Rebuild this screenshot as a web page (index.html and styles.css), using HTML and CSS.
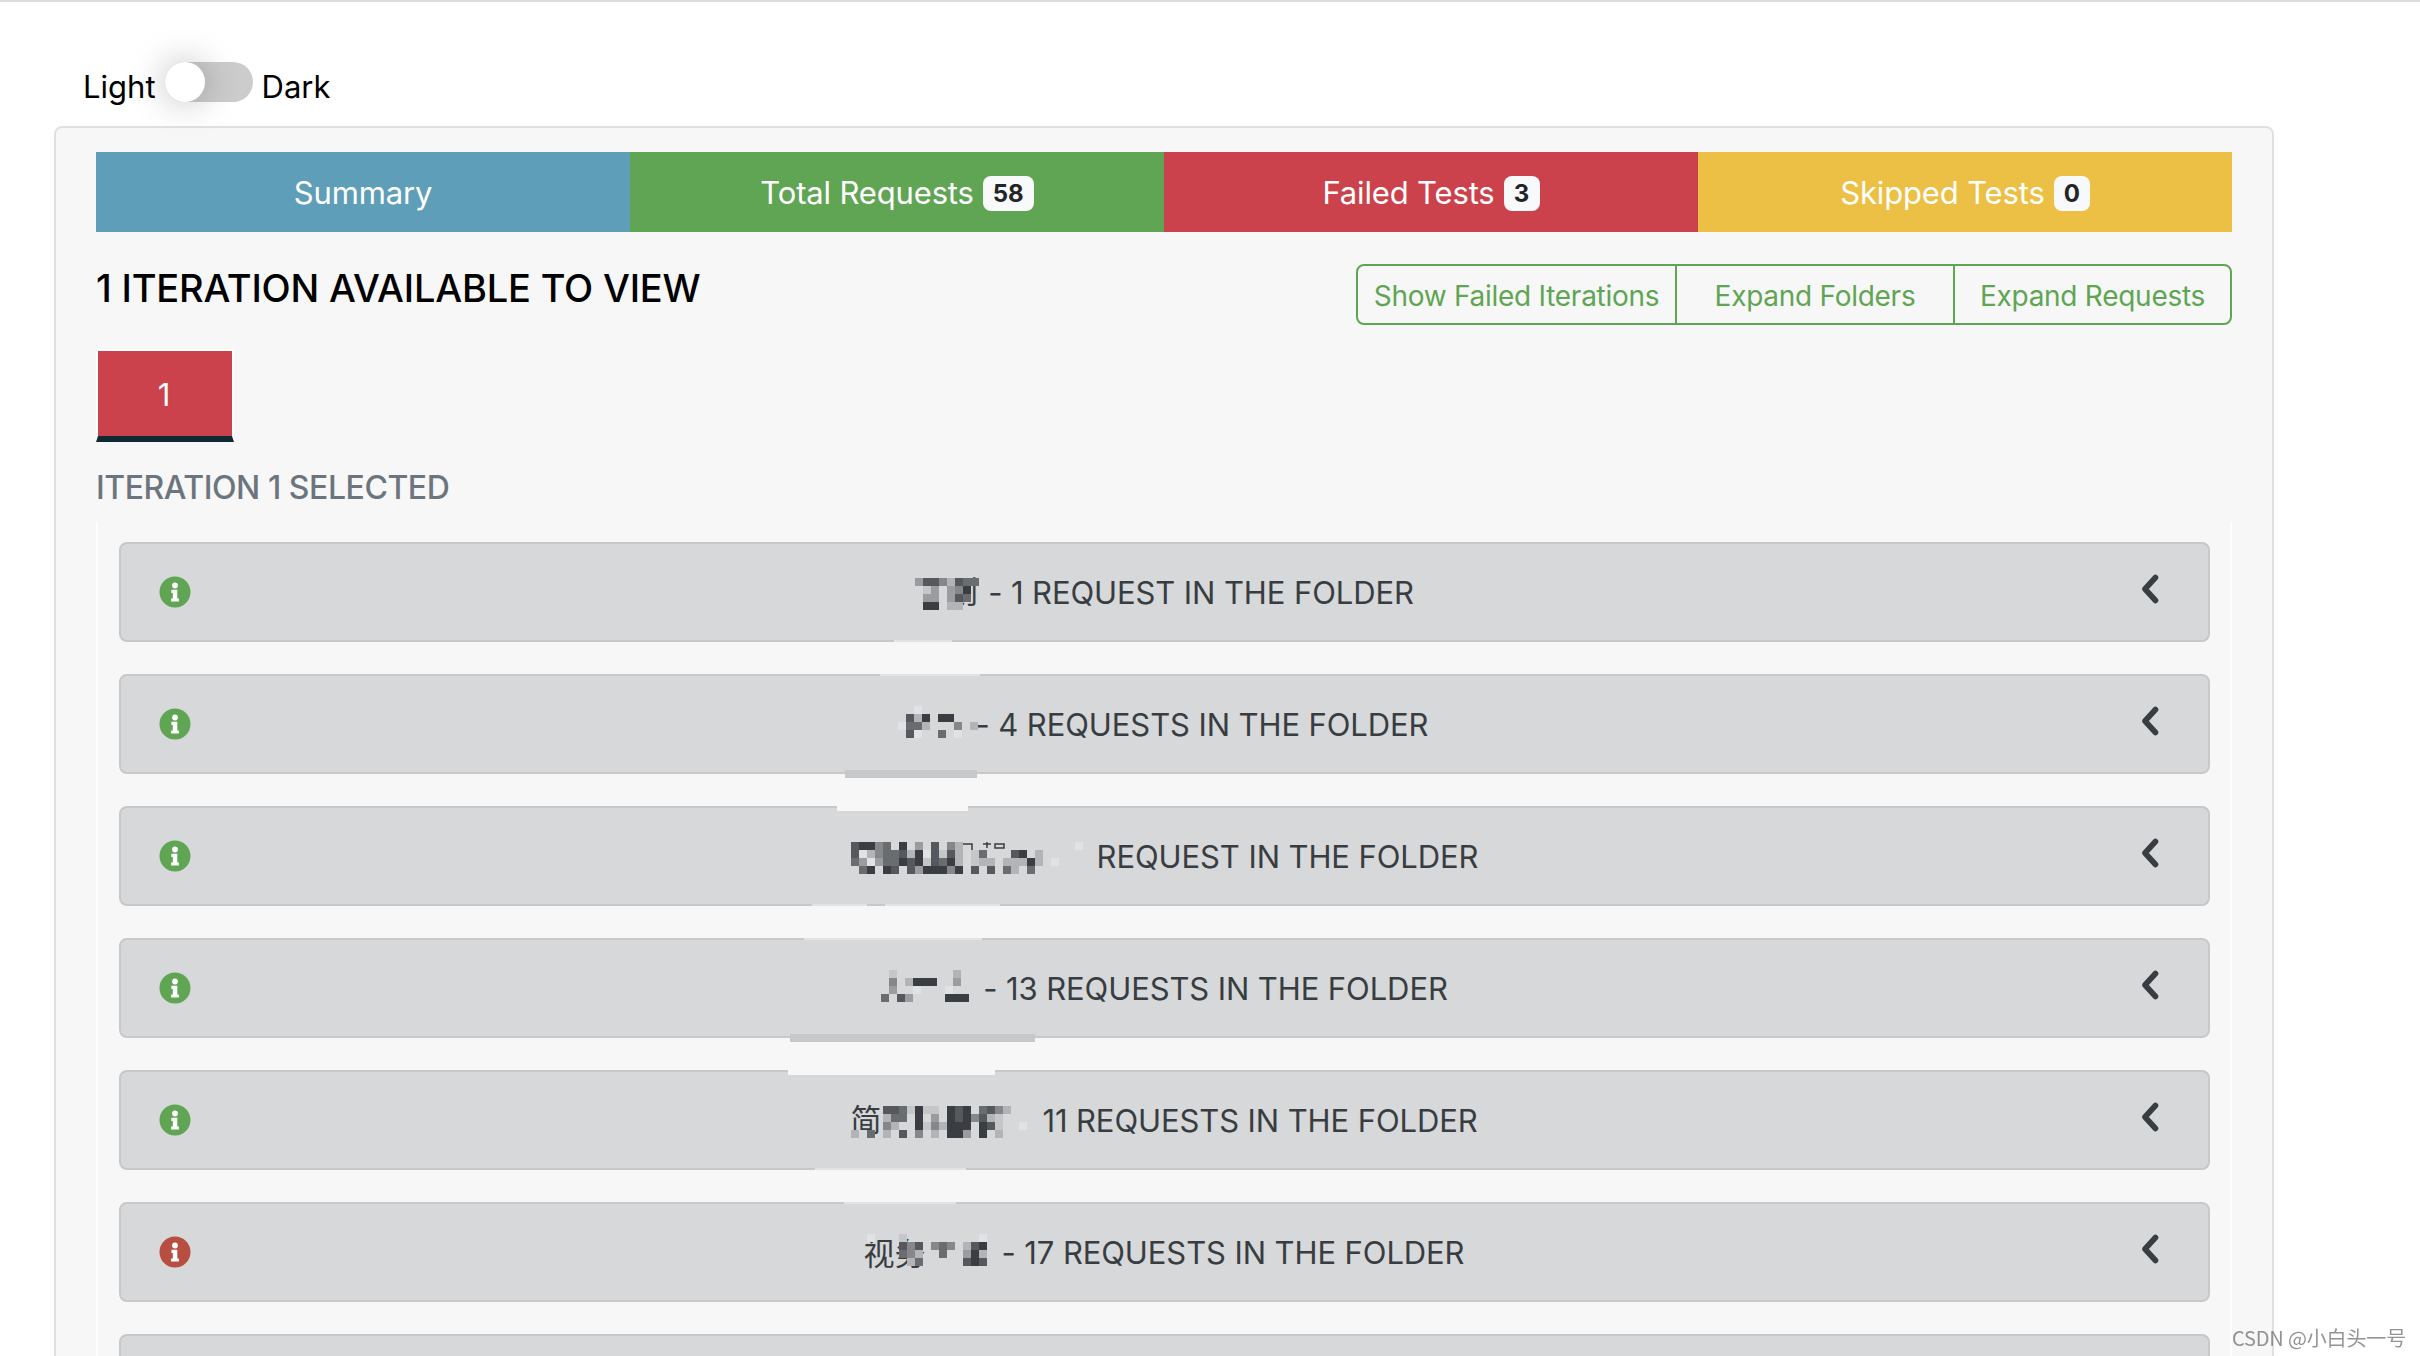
FILE: index.html
```html
<!DOCTYPE html>
<html lang="en">
<head>
<meta charset="utf-8">
<title>Newman Report</title>
<link rel="stylesheet" href="styles.css">
</head>
<body>
<svg class="defs" width="0" height="0" aria-hidden="true">
  <symbol id="info" viewBox="0 0 32 32">
    <circle cx="16" cy="16" r="15.5" fill="currentColor"/>
    <circle cx="16" cy="9.5" r="2.9" fill="#fff"/>
    <path d="M12.4 13.8h5.9v8.6h1.6v3.2h-7.8v-3.2h1.7v-5.4h-1.4z" fill="#fff"/>
  </symbol>
  <symbol id="chev" viewBox="-3 0 22 30">
    <path d="M14.5 3.5 4 15l10.5 11.5" fill="none" stroke="currentColor" stroke-width="5.6" stroke-linecap="round" stroke-linejoin="round"/>
  </symbol>
</svg>

<div class="topline"></div>
<div class="theme">
  <span>Light</span>
  <span class="switch"><span class="knob"></span></span>
  <span>Dark</span>
</div>

<main class="card">
  <nav class="tabs">
    <div class="tab blue">Summary</div>
    <div class="tab green">Total Requests <span class="badge">58</span></div>
    <div class="tab red">Failed Tests <span class="badge">3</span></div>
    <div class="tab yellow">Skipped Tests <span class="badge">0</span></div>
  </nav>

  <div class="headrow">
    <h2 class="heading">1 ITERATION AVAILABLE TO VIEW</h2>
    <div class="btns">
      <button class="btn">Show Failed Iterations</button>
      <button class="btn">Expand Folders</button>
      <button class="btn">Expand Requests</button>
    </div>
  </div>

  <div class="tile">1</div>
  <p class="selected">ITERATION 1 SELECTED</p>

  <section class="list">
    <div class="row">
      <i class="patch light bot" style="left:773px;width:58px"></i>
      <svg class="ico ok"><use href="#info"/></svg>
      <div class="title">
        <span class="mask w73 lo"><span class="cjk at32">则</span>
          <svg class="mosaic" width="73" height="32">
            <rect class="s5" x="0"/><rect class="s2" x="8"/><rect class="s2" x="16"/><rect class="s4" x="24"/><rect class="s6" x="32"/><rect class="s2" x="40"/><rect class="s3" x="48"/><rect class="s3" x="56"/>
            <rect class="s7" x="8" y="8"/><rect class="s5" x="16" y="8"/><rect class="s5" x="32" y="8"/><rect class="s4" x="40" y="8"/><rect class="s1" x="48" y="8"/>
            <rect class="s5" x="8" y="16"/><rect class="s5" x="16" y="16"/><rect class="s5" x="32" y="16"/><rect class="s2" x="40" y="16"/><rect class="s3" x="48" y="16"/>
            <rect class="s1" x="8" y="24"/><rect class="s1" x="16" y="24"/><rect class="s6" x="32" y="24"/><rect class="s6" x="40" y="24"/>
          </svg></span>
        <span class="label">- 1 REQUEST IN THE FOLDER</span>
      </div>
      <svg class="chev"><use href="#chev"/></svg>
    </div>

    <div class="row">
      <i class="patch light top" style="left:759px;width:100px"></i>
      <i class="patch dark bot" style="left:724px;width:132px"></i>
      <svg class="ico ok"><use href="#info"/></svg>
      <div class="title nudge">
        <span class="mask w78 hi">
          <svg class="mosaic" width="78" height="32">
            <rect class="s8" x="16"/>
            <rect class="s2" x="8" y="8"/><rect class="s6" x="16" y="8"/><rect class="s1" x="24" y="8"/><rect class="s1" x="40" y="8"/><rect class="s1" x="48" y="8"/>
            <rect class="s8" x="0" y="16"/><rect class="s3" x="8" y="16"/><rect class="s3" x="16" y="16"/><rect class="s6" x="24" y="16"/><rect class="s4" x="56" y="16"/><rect class="s6" x="72" y="16"/>
            <rect class="s2" x="8" y="24"/><rect class="s8" x="16" y="24"/><rect class="s3" x="40" y="24"/><rect class="s8" x="56" y="24"/>
          </svg></span>
        <span class="label">- 4 REQUESTS IN THE FOLDER</span>
      </div>
      <svg class="chev"><use href="#chev"/></svg>
    </div>

    <div class="row">
      <i class="patch white top thick" style="left:716px;width:131px"></i>
      <i class="patch light bot" style="left:691px;width:55px"></i>
      <i class="patch light bot" style="left:764px;width:115px"></i>
      <svg class="ico ok"><use href="#info"/></svg>
      <div class="title">
        <span class="mask w246 lo">
          <svg class="mosaic" width="246" height="32">
            <rect class="s2" x="0"/><rect class="s1" x="8"/><rect class="s1" x="16"/><rect class="s4" x="24"/><rect class="s3" x="32"/><rect class="s1" x="48"/><rect class="s5" x="64"/><rect class="s2" x="80"/><rect class="s4" x="96"/><rect class="s6" x="104"/><rect class="s8" x="224" y="0"/>
            <rect class="s2" x="0" y="8"/><rect class="s8" x="8" y="8"/><rect class="s6" x="16" y="8"/><rect class="s4" x="24" y="8"/><rect class="s3" x="32" y="8"/><rect class="s3" x="40" y="8"/><rect class="s2" x="48" y="8"/><rect class="s6" x="56" y="8"/><rect class="s1" x="64" y="8"/><rect class="s8" x="72" y="8"/><rect class="s2" x="80" y="8"/><rect class="s7" x="88" y="8"/><rect class="s2" x="96" y="8"/><rect class="s6" x="104" y="8"/><rect class="s7" x="120" y="8"/><rect class="s3" x="128" y="8"/><rect class="s2" x="160" y="8"/><rect class="s1" x="168" y="8"/><rect class="s6" x="184" y="8"/>
            <rect class="s3" x="0" y="16"/><rect class="s5" x="8" y="16"/><rect class="s8" x="16" y="16"/><rect class="s5" x="24" y="16"/><rect class="s3" x="32" y="16"/><rect class="s3" x="40" y="16"/><rect class="s1" x="48" y="16"/><rect class="s2" x="56" y="16"/><rect class="s1" x="64" y="16"/><rect class="s7" x="72" y="16"/><rect class="s2" x="80" y="16"/><rect class="s3" x="88" y="16"/><rect class="s1" x="96" y="16"/><rect class="s6" x="104" y="16"/><rect class="s7" x="120" y="16"/><rect class="s6" x="128" y="16"/><rect class="s6" x="136" y="16"/><rect class="s6" x="152" y="16"/><rect class="s6" x="160" y="16"/><rect class="s6" x="168" y="16"/><rect class="s1" x="176" y="16"/><rect class="s6" x="184" y="16"/><rect class="s8" x="200" y="16"/>
            <rect class="s3" x="8" y="24"/><rect class="s1" x="16" y="24"/><rect class="s1" x="32" y="24"/><rect class="s2" x="40" y="24"/><rect class="s2" x="56" y="24"/><rect class="s5" x="64" y="24"/><rect class="s1" x="72" y="24"/><rect class="s1" x="80" y="24"/><rect class="s1" x="88" y="24"/><rect class="s4" x="96" y="24"/><rect class="s1" x="104" y="24"/><rect class="s2" x="120" y="24"/><rect class="s2" x="136" y="24"/><rect class="s3" x="152" y="24"/><rect class="s6" x="160" y="24"/><rect class="s3" x="176" y="24"/>
            <path class="scrap" d="M112 2h9v6M132 2h8M136 0v6M144 2h9v4h-9z"/>
          </svg></span>
        <span class="label">REQUEST IN THE FOLDER</span>
      </div>
      <svg class="chev"><use href="#chev"/></svg>
    </div>

    <div class="row">
      <i class="patch light top" style="left:683px;width:178px"></i>
      <i class="patch dark bot" style="left:669px;width:245px"></i>
      <svg class="ico ok"><use href="#info"/></svg>
      <div class="title">
        <span class="mask w102 hi">
          <svg class="mosaic" width="102" height="32">
            <rect class="s7" x="8"/><rect class="s6" x="72"/>
            <rect class="s4" x="8" y="8"/><rect class="s6" x="24" y="8"/><rect class="s1" x="32" y="8"/><rect class="s1" x="40" y="8"/><rect class="s1" x="48" y="8"/><rect class="s5" x="72" y="8"/>
            <rect class="s5" x="8" y="16"/><rect class="s8" x="32" y="16"/><rect class="s8" x="64" y="16"/>
            <rect class="s3" x="0" y="24"/><rect class="s2" x="16" y="24"/><rect class="s5" x="24" y="24"/><rect class="s1" x="64" y="24"/><rect class="s1" x="72" y="24"/><rect class="s1" x="80" y="24"/>
          </svg></span>
        <span class="label">- 13 REQUESTS IN THE FOLDER</span>
      </div>
      <svg class="chev"><use href="#chev"/></svg>
    </div>

    <div class="row">
      <i class="patch white top thick" style="left:667px;width:207px"></i>
      <i class="patch light bot" style="left:694px;width:151px"></i>
      <svg class="ico ok"><use href="#info"/></svg>
      <div class="title">
        <span class="mask w191 lo"><span class="cjk">简</span>
          <svg class="mosaic" width="191" height="32">
            <rect class="s2" x="32"/><rect class="s2" x="40"/><rect class="s3" x="48"/><rect class="s7" x="56"/><rect class="s1" x="64"/><rect class="s7" x="72"/><rect class="s7" x="80"/><rect class="s1" x="96"/><rect class="s2" x="104"/><rect class="s1" x="112"/><rect class="s3" x="128"/><rect class="s2" x="136"/><rect class="s4" x="144"/><rect class="s6" x="152"/>
            <rect class="s6" x="32" y="8"/><rect class="s3" x="40" y="8"/><rect class="s3" x="48" y="8"/><rect class="s1" x="64" y="8"/><rect class="s5" x="80" y="8"/><rect class="s1" x="96" y="8"/><rect class="s2" x="104" y="8"/><rect class="s1" x="112" y="8"/><rect class="s4" x="120" y="8"/><rect class="s2" x="128" y="8"/><rect class="s6" x="136" y="8"/><rect class="s7" x="144" y="8"/>
            <rect class="s4" x="32" y="16"/><rect class="s6" x="40" y="16"/><rect class="s1" x="64" y="16"/><rect class="s7" x="72" y="16"/><rect class="s4" x="80" y="16"/><rect class="s6" x="88" y="16"/><rect class="s1" x="96" y="16"/><rect class="s1" x="104" y="16"/><rect class="s1" x="112" y="16"/><rect class="s1" x="128" y="16"/><rect class="s2" x="136" y="16"/><rect class="s7" x="144" y="16"/><rect class="s8" x="168" y="16"/>
            <rect class="s6" x="0" y="24"/><rect class="s3" x="16" y="24"/><rect class="s6" x="32" y="24"/><rect class="s2" x="48" y="24"/><rect class="s4" x="64" y="24"/><rect class="s6" x="80" y="24"/><rect class="s1" x="96" y="24"/><rect class="s1" x="104" y="24"/><rect class="s5" x="112" y="24"/><rect class="s1" x="128" y="24"/><rect class="s6" x="144" y="24"/>
          </svg></span>
        <span class="label">11 REQUESTS IN THE FOLDER</span>
      </div>
      <svg class="chev"><use href="#chev"/></svg>
    </div>

    <div class="row">
      <i class="patch light top" style="left:723px;width:112px"></i>
      <svg class="ico bad"><use href="#info"/></svg>
      <div class="title">
        <span class="mask w137 hi"><span class="cjk low">视务</span>
          <svg class="mosaic" width="137" height="32">
            <rect class="s8" x="2"/><rect class="s7" x="34"/><rect class="s8" x="114"/>
            <rect class="s2" x="34" y="8"/><rect class="s4" x="42" y="8"/><rect class="s2" x="50" y="8"/><rect class="s4" x="66" y="8"/><rect class="s3" x="74" y="8"/><rect class="s4" x="82" y="8"/><rect class="s6" x="98" y="8"/><rect class="s2" x="106" y="8"/><rect class="s1" x="114" y="8"/>
            <rect class="s3" x="34" y="16"/><rect class="s4" x="42" y="16"/><rect class="s6" x="50" y="16"/><rect class="s3" x="74" y="16"/><rect class="s5" x="98" y="16"/><rect class="s1" x="106" y="16"/><rect class="s6" x="114" y="16"/>
            <rect class="s6" x="42" y="24"/><rect class="s3" x="50" y="24"/><rect class="s2" x="98" y="24"/><rect class="s1" x="106" y="24"/><rect class="s2" x="114" y="24"/>
          </svg></span>
        <span class="label">- 17 REQUESTS IN THE FOLDER</span>
      </div>
      <svg class="chev"><use href="#chev"/></svg>
    </div>

    <div class="row"></div>
  </section>
</main>

<div class="watermark">CSDN @小白头一号</div>
</body>
</html>
```

FILE: styles.css
```css
* { box-sizing: border-box; }
html, body { margin: 0; height: 100%; overflow: hidden; }
body {
  background: #fff;
  color: #000;
  font-family: Inter, "Noto Sans CJK SC", sans-serif;
  font-size: 32px;
  line-height: 48px;
}
.defs { position: absolute; }

.topline { height: 2px; background: #ddd; }
.theme {
  display: flex;
  align-items: flex-start;
  gap: 9px;
  padding: 61px 0 0 83px;
  height: 124px;
  font-size: 31px;
}
.switch {
  display: flex;
  width: 88px;
  height: 40px;
  margin-top: -1px;
  border-radius: 20px;
  background: #ccc;
}
.knob {
  width: 40px;
  height: 40px;
  border-radius: 50%;
  background: #fff;
  box-shadow: 0 0 36px rgba(0, 0, 0, .28);
}

.card {
  width: 2220px;
  margin-left: 54px;
  padding: 24px 40px 0;
  background: #f7f7f7;
  border: 2px solid #e0e0e0;
  border-radius: 8px;
}
.tabs { display: grid; grid-template-columns: repeat(4, 534px); }
.tab {
  display: flex;
  align-items: center;
  justify-content: center;
  gap: 9px;
  height: 80px;
  padding-top: 2px;
  color: #fff;
  font-size: 31px;
  letter-spacing: -.15px;
}
.blue { background: #5f9eb8; }
.green { background: #5fa553; }
.red { background: #cc424c; }
.yellow { background: #ecc044; }
.badge {
  display: block;
  min-width: 36px;
  padding: 0 10px;
  height: 35px;
  border-radius: 8px;
  background: #f8f9fa;
  color: #212529;
  font-size: 24px;
  font-weight: 700;
  letter-spacing: 0;
  line-height: 35px;
  text-align: center;
}

.headrow {
  display: flex;
  justify-content: space-between;
  align-items: flex-start;
  margin-top: 32px;
}
.heading {
  margin: 0;
  font-size: 38px;
  font-weight: 500;
  letter-spacing: -.2px;
  line-height: 48px;
}
.btns {
  display: grid;
  grid-template-columns: 317px 278px 277px;
  height: 61px;
  border: 2px solid #5fa553;
  border-radius: 8px;
}
.btn {
  padding: 2px 0 0;
  background: none;
  border: 0;
  color: #5fa553;
  font: inherit;
  font-size: 28px;
  letter-spacing: -.27px;
}
.btn + .btn { border-left: 2px solid #5fa553; }

.tile {
  width: 138px;
  height: 93px;
  margin-top: 24px;
  padding: 1px 2px 0 0;
  background: #cc424c;
  background-clip: padding-box;
  border: 2px solid #fff;
  border-bottom: 6px solid #102a33;
  color: #fff;
  font-size: 31px;
  line-height: 85px;
  text-align: center;
}
.selected {
  margin: 22px 0 10px;
  color: #6c757d;
  font-weight: 500;
  letter-spacing: -.45px;
}

.list {
  display: flex;
  flex-direction: column;
  gap: 32px;
  padding: 20px 20px 0 21px;
  border-left: 2px solid #fdfdfd;
  border-right: 2px solid #fdfdfd;
}
.row {
  position: relative;
  display: flex;
  align-items: center;
  flex: none;
  height: 100px;
  padding: 0 36px 0 38px;
  background: #d6d8da;
  border: 2px solid #c6c8ca;
  border-radius: 8px;
  color: #383d41;
}
.ico { flex: none; width: 32px; height: 32px; }
.ok { color: #5fa553; }
.bad { color: #b84d41; }
.chev {
  flex: none;
  width: 22px;
  height: 30px;
  margin: 0 12px 6px 0;
  color: #383d41;
}
.title {
  display: flex;
  align-items: center;
  justify-content: center;
  flex: 1;
  font-size: 31px;
}
.nudge { padding-right: 3px; }
.label {
  margin-top: 1px;
  letter-spacing: -.1px;
  white-space: nowrap;
}

.mask { position: relative; display: block; height: 32px; flex: none; }
.w73 { width: 73px; }
.w78 { width: 78px; }
.w102 { width: 102px; }
.w137 { width: 137px; }
.w191 { width: 191px; }
.w246 { width: 246px; }
.lo { margin-top: 4px; }
.hi { margin-bottom: 4px; }
.cjk {
  position: absolute;
  top: -12px;
  left: -1px;
  font-family: "Noto Sans CJK SC", sans-serif;
  font-size: 31px;
  white-space: nowrap;
}
.at32 { left: 32px; }
.low { top: -6px; }
.mosaic { position: relative; display: block; overflow: visible; }
.mosaic rect { width: 8px; height: 8px; }
.scrap { fill: none; stroke: #3a3d41; stroke-width: 1.5; }
.s1 { fill: #3a3d41; }
.s2 { fill: #55585c; }
.s3 { fill: #6a6d70; }
.s4 { fill: #85878a; }
.s5 { fill: #9a9c9f; }
.s6 { fill: #b2b4b7; }
.s7 { fill: #c4c6c8; }
.s8 { fill: #e0e2e4; }

.patch { position: absolute; height: 2px; }
.top { top: -2px; }
.bot { bottom: -2px; }
.light { background: #e2e3e5; }
.white { background: #f7f7f7; }
.thick { height: 5px; }
.dark { height: 8px; bottom: -6px; background: #c6c8ca; }

.watermark {
  position: fixed;
  right: 14px;
  bottom: 5px;
  color: rgba(120, 120, 120, .8);
  font-family: "Noto Sans CJK SC", sans-serif;
  font-size: 20px;
  letter-spacing: -.15px;
  line-height: 26px;
}
```
